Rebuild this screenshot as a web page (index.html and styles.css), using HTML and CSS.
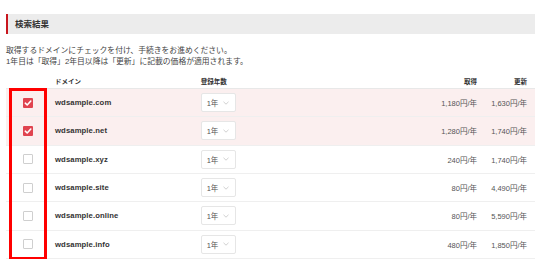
FILE: index.html
```html
<!DOCTYPE html>
<html lang="ja">
<head>
<meta charset="utf-8">
<link rel="stylesheet" href="styles.css">
</head>
<body>
<div class="page">
  <h2 class="title">検索結果</h2>
  <p class="desc">取得するドメインにチェックを付け、手続きをお進めください。<br>1年目は「取得」2年目以降は「更新」に記載の価格が適用されます。</p>
  <div class="table">
    <div class="row head">
      <span></span>
      <span>ドメイン</span>
      <span>登録年数</span>
      <span class="num">取得</span>
      <span class="num">更新</span>
    </div>
    <div class="row sel">
      <span class="cb on"><svg viewBox="0 0 10 10" width="10" height="10"><path d="M2.3 5.2 L4.2 7 L7.8 3" fill="none" stroke="#fff" stroke-width="1.6" stroke-linecap="round" stroke-linejoin="round"/></svg></span>
      <span class="dom">wdsample.com</span>
      <span class="yr">1年<svg viewBox="0 0 6 4" width="6" height="4"><path d="M0.5 0.8 L3 3.2 L5.5 0.8" fill="none" stroke="#c4c4c4" stroke-width="0.8"/></svg></span>
      <span class="num">1,180円/年</span>
      <span class="num">1,630円/年</span>
    </div>
    <div class="row sel">
      <span class="cb on"><svg viewBox="0 0 10 10" width="10" height="10"><path d="M2.3 5.2 L4.2 7 L7.8 3" fill="none" stroke="#fff" stroke-width="1.6" stroke-linecap="round" stroke-linejoin="round"/></svg></span>
      <span class="dom">wdsample.net</span>
      <span class="yr">1年<svg viewBox="0 0 6 4" width="6" height="4"><path d="M0.5 0.8 L3 3.2 L5.5 0.8" fill="none" stroke="#c4c4c4" stroke-width="0.8"/></svg></span>
      <span class="num">1,280円/年</span>
      <span class="num">1,740円/年</span>
    </div>
    <div class="row">
      <span class="cb"></span>
      <span class="dom">wdsample.xyz</span>
      <span class="yr">1年<svg viewBox="0 0 6 4" width="6" height="4"><path d="M0.5 0.8 L3 3.2 L5.5 0.8" fill="none" stroke="#c4c4c4" stroke-width="0.8"/></svg></span>
      <span class="num">240円/年</span>
      <span class="num">1,740円/年</span>
    </div>
    <div class="row">
      <span class="cb"></span>
      <span class="dom">wdsample.site</span>
      <span class="yr">1年<svg viewBox="0 0 6 4" width="6" height="4"><path d="M0.5 0.8 L3 3.2 L5.5 0.8" fill="none" stroke="#c4c4c4" stroke-width="0.8"/></svg></span>
      <span class="num">80円/年</span>
      <span class="num">4,490円/年</span>
    </div>
    <div class="row">
      <span class="cb"></span>
      <span class="dom">wdsample.online</span>
      <span class="yr">1年<svg viewBox="0 0 6 4" width="6" height="4"><path d="M0.5 0.8 L3 3.2 L5.5 0.8" fill="none" stroke="#c4c4c4" stroke-width="0.8"/></svg></span>
      <span class="num">80円/年</span>
      <span class="num">5,590円/年</span>
    </div>
    <div class="row">
      <span class="cb"></span>
      <span class="dom">wdsample.info</span>
      <span class="yr">1年<svg viewBox="0 0 6 4" width="6" height="4"><path d="M0.5 0.8 L3 3.2 L5.5 0.8" fill="none" stroke="#c4c4c4" stroke-width="0.8"/></svg></span>
      <span class="num">480円/年</span>
      <span class="num">1,850円/年</span>
    </div>
    <div class="highlight"></div>
  </div>
</div>
</body>
</html>
```
FILE: styles.css
```css
* { box-sizing: border-box; }
html, body { margin: 0; padding: 0; background: #fff; }
body {
  font-family: "Liberation Sans", "Noto Sans CJK JP", sans-serif;
  color: #444;
}
.page {
  width: 529px;
  margin-left: 6px;
  padding-top: 14px;
}
.title {
  margin: 0;
  height: 20px;
  background: #ececec;
  border-left: 2px solid #c8161e;
  padding-left: 7px;
  font-size: 8.5px;
  font-weight: bold;
  line-height: 21px;
  color: #333;
}
.desc {
  margin: 11px 0 0;
  font-size: 7.8px;
  line-height: 11px;
  color: #444;
}
.table {
  position: relative;
  margin-top: 4px;
}
.row {
  display: grid;
  grid-template-columns: 49px 145.7px 1fr 60px 50px;
  padding-right: 8px;
  align-items: center;
  height: 28.33px;
  border-bottom: 1px solid #efefef;
  font-size: 7.5px;
  color: #555;
}
.row.head {
  height: 18px;
  padding-top: 3px;
  font-size: 6.5px;
  font-weight: bold;
  color: #333;
  border-bottom: 1px solid #e8e8e8;
}
.row.sel { background: #fbefef; }
.num { text-align: right; }
.dom {
  font-weight: bold;
  font-size: 7.7px;
  color: #333;
  letter-spacing: 0.1px;
}
.cb {
  width: 10px;
  height: 10px;
  margin-left: 16.7px;
  border: 1px solid #cfcfcf;
  border-radius: 1px;
  background: #fff;
  display: block;
}
.cb.on {
  border: none;
  background: #e0434f;
}
.cb svg { display: block; }
.yr {
  width: 35px;
  height: 19px;
  border: 1px solid #e6e6e6;
  border-radius: 2px;
  background: #fff;
  display: flex;
  align-items: center;
  padding-left: 5px;
  gap: 5px;
  color: #555;
}
.yr svg { display: block; }
.highlight {
  position: absolute;
  left: 3px;
  top: 17px;
  width: 38px;
  height: 172px;
  border: 3px solid #f00;
}
```
